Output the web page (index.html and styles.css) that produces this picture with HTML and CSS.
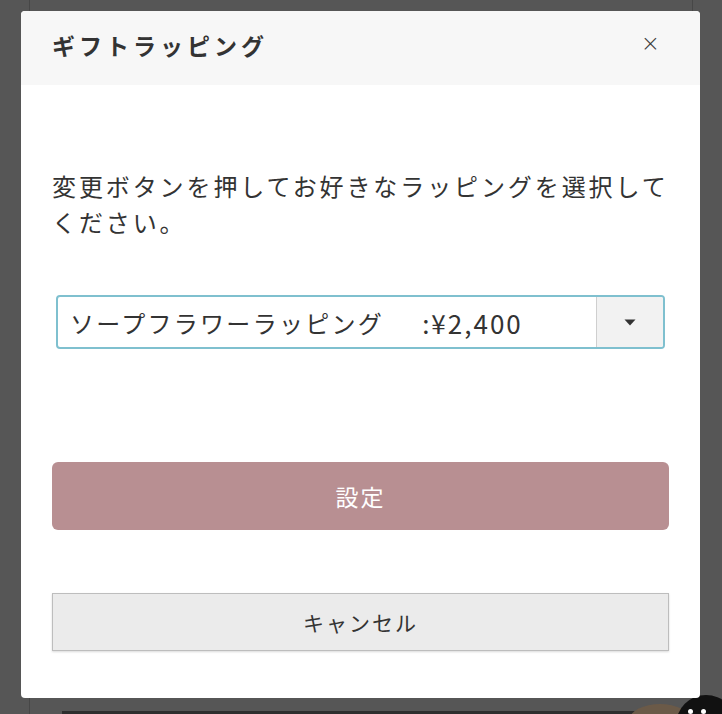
FILE: index.html
```html
<!DOCTYPE html>
<html lang="ja">
<head>
<meta charset="utf-8">
<title>ギフトラッピング</title>
<link rel="stylesheet" href="styles.css">
</head>
<body>
<div class="backdrop">
  <div class="page">
    <div class="page-bar"></div>
  </div>
  <div class="chat-blob"></div>
  <div class="chat-icon"><span class="eye"></span><span class="eye"></span></div>
</div>
<div class="modal">
  <div class="modal-header">
    <h2 class="modal-title">ギフトラッピング</h2>
    <span class="modal-close">×</span>
  </div>
  <div class="modal-body">
    <p class="lead">変更ボタンを押してお好きなラッピングを選択してください。</p>
    <div class="select">
      <span class="select-value">ソープフラワーラッピング　 <span class="price">:¥2,400</span></span>
      <span class="select-arrow"><svg width="12" height="7" viewBox="0 0 12 7"><path d="M0.5 0.5 L11.5 0.5 L6 6.5 Z" fill="#333"/></svg></span>
    </div>
    <button class="btn btn-primary">設定</button>
    <button class="btn btn-cancel">キャンセル</button>
  </div>
</div>
</body>
</html>
```
FILE: styles.css
```css
html, body {
  margin: 0;
  padding: 0;
}
body {
  width: 722px;
  height: 714px;
  overflow: hidden;
  background: #565656;
  font-family: "Noto Sans CJK JP", "Noto Sans", sans-serif;
  position: relative;
}
.backdrop {
  height: 714px;
  padding: 0 29px;
  box-sizing: border-box;
  position: relative;
  overflow: hidden;
}
.page {
  height: 714px;
  border-left: 1px solid #474747;
  border-right: 1px solid #474747;
  box-sizing: border-box;
  width: 664px;
  display: flex;
  flex-direction: column;
  justify-content: flex-end;
}
.page-bar {
  height: 3px;
  margin-left: 32px;
  background: #2e2e2e;
}
.chat-blob {
  position: absolute;
  left: 630px;
  top: 704px;
  width: 60px;
  height: 30px;
  border-radius: 50%;
  background: #6b5a48;
}
.chat-icon {
  position: absolute;
  left: 676px;
  top: 695px;
  width: 60px;
  height: 60px;
  border-radius: 50%;
  background: #111;
  display: flex;
  gap: 8px;
  padding: 14px 0 0 12px;
  box-sizing: border-box;
}
.eye {
  width: 5px;
  height: 5px;
  border-radius: 50%;
  background: #fff;
}
.modal {
  position: absolute;
  left: 21px;
  top: 11px;
  width: 679px;
  height: 687px;
  background: #fff;
  border-radius: 4px;
  overflow: hidden;
}
.modal-header {
  height: 74px;
  background: #f7f7f7;
  display: flex;
  align-items: center;
  justify-content: space-between;
  padding: 0 40px 0 31px;
  box-sizing: border-box;
}
.modal-title {
  margin: 0;
  font-size: 23px;
  font-weight: 700;
  letter-spacing: 4px;
  color: #333;
  line-height: 1;
  padding-bottom: 6px;
}
.modal-close {
  font-size: 23px;
  color: #3a3a3a;
  font-family: "DejaVu Sans", sans-serif;
  font-weight: 300;
  padding-bottom: 10px;
}
.modal-body {
  padding: 83px 31px 0 31px;
  display: flex;
  flex-direction: column;
}
.lead {
  margin: 0;
  font-size: 24px;
  letter-spacing: 2.9px;
  line-height: 36px;
  color: #333;
}
.select {
  margin: 55px 4px 0 4px;
  height: 54px;
  border: 2px solid #7fc0cf;
  border-radius: 4px;
  box-sizing: border-box;
  display: flex;
  align-items: stretch;
  overflow: hidden;
}
.select-value {
  flex: 1;
  display: flex;
  align-items: center;
  padding-left: 12px;
  font-size: 24px;
  color: #333;
  letter-spacing: 2.3px;
  white-space: pre;
}
.price {
  font-size: 26px;
  letter-spacing: 2px;
  margin-left: 4px;
}
.select-arrow {
  width: 66px;
  background: #f2f2f2;
  border-left: 1px solid #cfcfcf;
  display: flex;
  align-items: center;
  justify-content: center;
}
.btn {
  display: block;
  width: 100%;
  font-family: "Noto Sans CJK JP", "Noto Sans", sans-serif;
  cursor: pointer;
}
.btn-primary {
  margin-top: 113px;
  height: 68px;
  border: none;
  border-radius: 6px;
  background: #b88f92;
  color: #fff;
  font-size: 23px;
  letter-spacing: 2px;
}
.btn-cancel {
  margin-top: 63px;
  height: 58px;
  border: 1px solid #bdbdbd;
  border-radius: 0;
  background: #ebebeb;
  color: #333;
  font-size: 21px;
  letter-spacing: 2px;
  box-shadow: 0 1px 2px rgba(0,0,0,0.15);
}
```
